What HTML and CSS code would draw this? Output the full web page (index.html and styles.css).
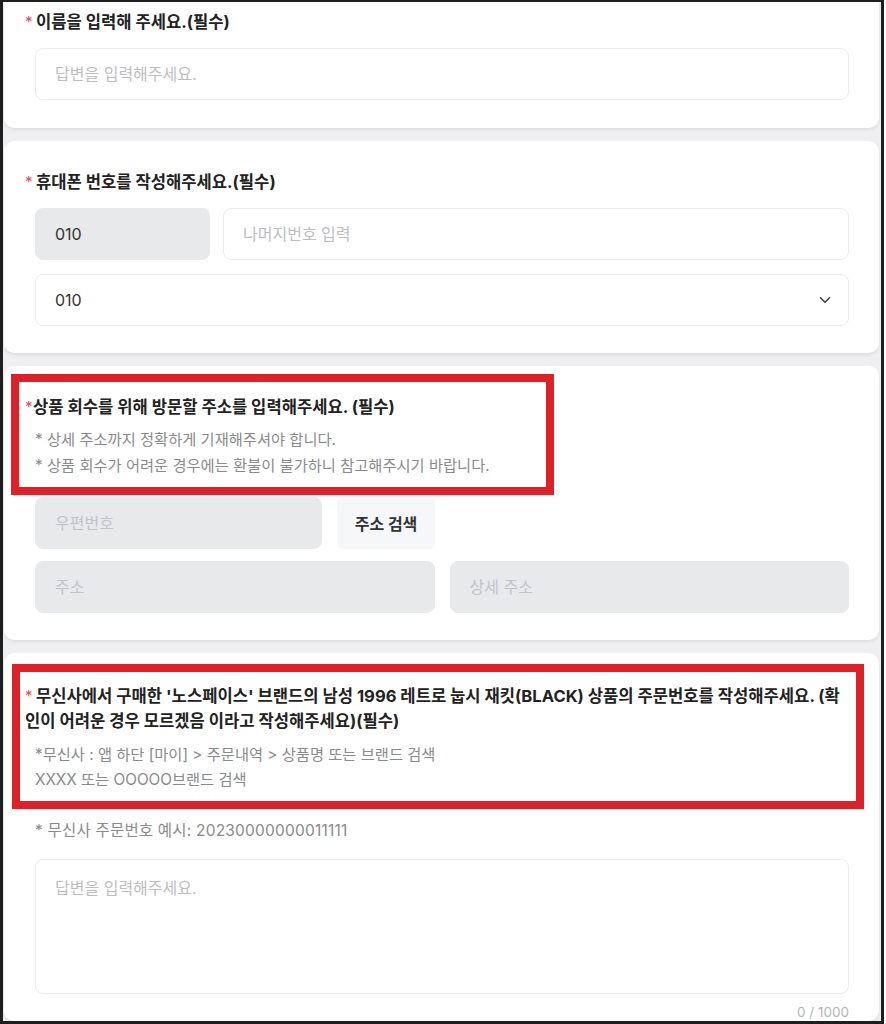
FILE: index.html
```html
<!DOCTYPE html>
<html>
  <head>
    <title>주문 정보 입력</title>
    <link rel="stylesheet" href="styles.css">
  </head>
  <body>
    <div class="frame">

      <section class="card card-first">
        <div class="question"><span class="req">*</span>이름을 입력해 주세요.(필수)</div>
        <input class="field" type="text" placeholder="답변을 입력해주세요.">
      </section>

      <section class="card">
        <div class="question"><span class="req">*</span>휴대폰 번호를 작성해주세요.(필수)</div>
        <div class="row">
          <div class="field field-gray prefix">010</div>
          <input class="field grow" type="text" placeholder="나머지번호 입력">
        </div>
        <div class="field select">
          <span>010</span>
          <svg width="12" height="8" viewBox="0 0 12 8">
            <path d="M1.5 1.8 L6 6.2 L10.5 1.8" fill="none" stroke="#444" stroke-width="1.6" stroke-linecap="round" stroke-linejoin="round"/>
          </svg>
        </div>
      </section>

      <section class="card">
        <div class="head">
          <div class="question question-tight"><span class="req">*</span>상품 회수를 위해 방문할 주소를 입력해주세요. (필수)</div>
          <p class="help">* 상세 주소까지 정확하게 기재해주셔야 합니다.</p>
          <p class="help">* 상품 회수가 어려운 경우에는 환불이 불가하니 참고해주시기 바랍니다.</p>
          <span class="redbox redbox-address"></span>
        </div>
        <div class="row row-zip">
          <input class="field field-gray zip" type="text" placeholder="우편번호">
          <button class="search">주소 검색</button>
        </div>
        <div class="row">
          <input class="field field-gray grow" type="text" placeholder="주소">
          <input class="field field-gray grow" type="text" placeholder="상세 주소">
        </div>
      </section>

      <section class="card card-last">
        <div class="head">
          <div class="question question-long"><span class="req">*</span>무신사에서 구매한 '노스페이스' 브랜드의 남성 1996 레트로 눕시 재킷(BLACK) 상품의 주문번호를 작성해주세요. (확인이 어려운 경우 모르겠음 이라고 작성해주세요)(필수)</div>
          <p class="help help-tall">*무신사 : 앱 하단 [마이] &gt; 주문내역 &gt; 상품명 또는 브랜드 검색<br>XXXX 또는 OOOOO브랜드 검색</p>
          <span class="redbox redbox-order"></span>
        </div>
        <p class="example">* 무신사 주문번호 예시: 20230000000011111</p>
        <textarea class="field area" placeholder="답변을 입력해주세요."></textarea>
        <div class="count">0 / 1000</div>
      </section>

    </div>
  </body>
</html>
```

FILE: styles.css
```css
body {
  margin: 0;
  background-color: white;
  font-family: Inter, "Noto Sans CJK KR", "Noto Sans", sans-serif;
  color: #222;
}

.frame {
  width: 884px;
  height: 1024px;
  box-sizing: border-box;
  border: 3px solid #1e1e1e;
  border-top-width: 2px;
  padding-left: 1px;
  background-color: #efeff1;
  overflow: hidden;
}

.card {
  width: 875px;
  box-sizing: border-box;
  background-color: white;
  border-radius: 10px;
  box-shadow: 0 2px 3px rgba(0, 0, 0, 0.07);
  padding: 30px 30px 27px 31px;
  margin-bottom: 13px;
}

.card-first {
  border-radius: 0 0 10px 10px;
  padding-top: 9px;
  padding-bottom: 28px;
}

.card-last {
  padding-bottom: 0;
  margin-bottom: 0;
}

.question {
  font-size: 16.6px;
  font-weight: 700;
  line-height: 22px;
  margin-left: -10px;
  margin-bottom: 15px;
}

.question-tight {
  margin-bottom: 0;
}

.question-tight .req {
  width: 8px;
}

.question-long {
  line-height: 25px;
  margin-bottom: 0;
  margin-right: 8px;
}

.req {
  display: inline-block;
  width: 11px;
  color: #e5484d;
  font-size: 15px;
  font-weight: 400;
  vertical-align: 1px;
}

.head {
  position: relative;
}

.help {
  margin: 0;
  font-size: 15.3px;
  line-height: 26px;
  color: #8a8a8a;
}

.head .question + .help {
  margin-top: 9px;
}

.help-tall {
  line-height: 25px;
}

.card-last .head .question + .help {
  margin-top: 8px;
}

.redbox {
  position: absolute;
  box-sizing: border-box;
  border: 8px solid #e11f26;
}

.redbox-address {
  left: -24px;
  top: -22px;
  width: 543px;
  height: 121px;
}

.redbox-order {
  left: -23px;
  top: -19px;
  width: 852px;
  height: 145px;
}

.field {
  display: block;
  width: 100%;
  height: 52px;
  box-sizing: border-box;
  border: 1px solid #ececee;
  border-radius: 8px;
  background-color: white;
  padding: 0 19px;
  font-family: inherit;
  font-size: 16px;
  color: #333;
  outline: none;
}

.field::placeholder {
  color: #bdbdbf;
}

.field-gray {
  background-color: #e8e9eb;
  border-color: #e8e9eb;
}

.field-gray::placeholder {
  color: #c2c3c6;
}

.row {
  display: flex;
  gap: 15px;
  margin-bottom: 14px;
}

.row:last-child {
  margin-bottom: 0;
}

.row-zip {
  margin-top: 18px;
  margin-bottom: 12px;
}

.grow {
  flex: 1;
  width: auto;
}

.prefix {
  width: 175px;
  flex: none;
  display: flex;
  align-items: center;
  margin-right: -2px;
}

.select {
  display: flex;
  align-items: center;
  justify-content: space-between;
  padding-right: 17px;
}

.zip {
  width: 287px;
  flex: none;
}

.search {
  width: 98px;
  height: 52px;
  border: none;
  border-radius: 6px;
  background-color: #f6f7f9;
  font-family: inherit;
  font-size: 16px;
  font-weight: 700;
  color: #333;
}

.example {
  margin: 28px 0 17px 0;
  font-size: 15.5px;
  line-height: 22px;
  color: #8a8a8a;
  letter-spacing: 0.2px;
}

.area {
  height: 135px;
  padding-top: 17px;
  resize: none;
  line-height: 22px;
}

.count {
  text-align: right;
  font-size: 13.5px;
  line-height: 18px;
  color: #b4b4b6;
  margin-top: 9px;
}
```
